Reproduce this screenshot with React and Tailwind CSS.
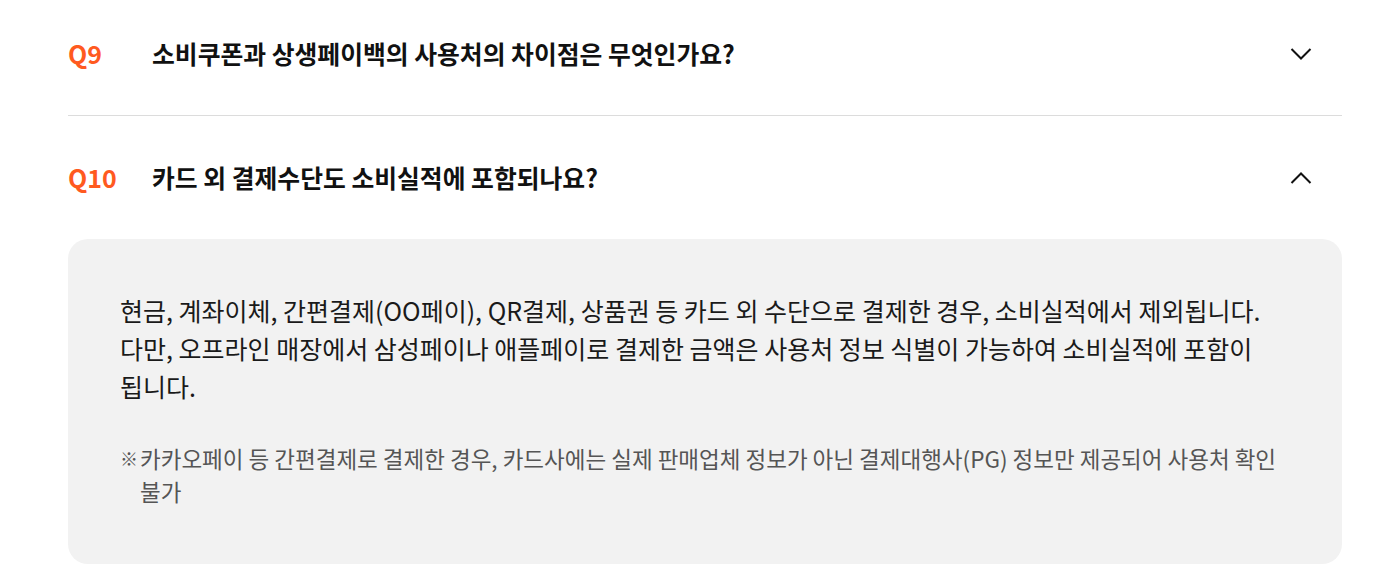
import { useState } from 'react'

const faqs = [
  {
    id: 'Q9',
    question: '소비쿠폰과 상생페이백의 사용처의 차이점은 무엇인가요?',
  },
  {
    id: 'Q10',
    question: '카드 외 결제수단도 소비실적에 포함되나요?',
    answer: [
      '현금, 계좌이체, 간편결제(OO페이), QR결제, 상품권 등 카드 외 수단으로 결제한 경우, 소비실적에서 제외됩니다.',
      '다만, 오프라인 매장에서 삼성페이나 애플페이로 결제한 금액은 사용처 정보 식별이 가능하여 소비실적에 포함이 됩니다.',
    ],
    note: '카카오페이 등 간편결제로 결제한 경우, 카드사에는 실제 판매업체 정보가 아닌 결제대행사(PG) 정보만 제공되어 사용처 확인 불가',
  },
]

function Chevron({ open }) {
  return (
    <svg width="22" height="12" viewBox="0 0 22 12" fill="none" className="shrink-0">
      {open ? (
        <polyline points="1.5,11 11,1.5 20.5,11" stroke="#111" strokeWidth="2" />
      ) : (
        <polyline points="1.5,1 11,10.5 20.5,1" stroke="#111" strokeWidth="2" />
      )}
    </svg>
  )
}

export default function App() {
  const [openId, setOpenId] = useState('Q10')

  return (
    <div
      className="w-full min-h-[580px] bg-white overflow-hidden"
      style={{ fontFamily: '"Noto Sans CJK KR", "Noto Sans", sans-serif' }}
    >
      <div className="ml-[68px] mr-[44px] -mt-[8px]">
        {faqs.map((item) => {
          const open = openId === item.id
          return (
            <div key={item.id} className={open ? '' : 'border-b border-[#dcdcdc]'}>
              <button
                onClick={() => setOpenId(open ? null : item.id)}
                className="w-full h-[123px] flex items-center text-left pr-[30px]"
              >
                <span className="w-[84px] shrink-0 text-[25px] font-bold text-[#ff5a1f]">
                  {item.id}
                </span>
                <span className="flex-1 text-[24.8px] font-bold text-[#111]">
                  {item.question}
                </span>
                <Chevron open={open} />
              </button>

              {open && item.answer && (
                <div className="bg-[#f2f2f2] rounded-[20px] px-[52px] pt-[52px] pb-[56px] break-keep">
                  <div className="text-[25px] leading-[38px] text-[#1a1a1a]">
                    {item.answer.map((line, i) => (
                      <p key={i}>{line}</p>
                    ))}
                  </div>
                  <p className="mt-[37px] flex text-[22.5px] leading-[33px] text-[#555]">
                    <span className="w-[20px] shrink-0 text-[18px] font-bold">※</span>
                    <span>{item.note}</span>
                  </p>
                </div>
              )}
            </div>
          )
        })}
      </div>
    </div>
  )
}
